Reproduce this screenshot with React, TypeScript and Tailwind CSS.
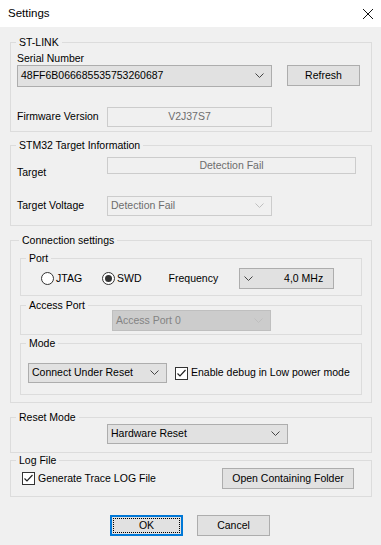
import { ReactNode } from 'react';
import { clsx } from 'clsx';

const Chevron = ({ disabled = false }: { disabled?: boolean }) => (
  <svg width="9" height="6" viewBox="0 0 9 6" className="shrink-0">
    <path d="M0.5 0.5 L4.5 4.5 L8.5 0.5" fill="none" stroke={disabled ? '#bfbfbf' : '#444'} strokeWidth="1" />
  </svg>
);

const Group = ({
  title,
  className,
  children,
}: {
  title: string;
  className?: string;
  children: ReactNode;
}) => (
  <fieldset className={clsx('border border-[#dcdcdc] px-[6px]', className)}>
    <legend className="ml-[-1px] px-[3px] leading-[14px]">{title}</legend>
    {children}
  </fieldset>
);

const Combo = ({
  value,
  className,
  disabled = false,
}: {
  value: string;
  className?: string;
  disabled?: boolean;
}) => (
  <div
    className={clsx(
      'flex items-center justify-between border pl-[3px] pr-[7px]',
      disabled ? 'bg-[#cccccc] border-[#bfbfbf] text-[#838383]' : 'bg-[#e1e1e1] border-[#adadad]',
      className
    )}
  >
    <span>{value}</span>
    <Chevron disabled={disabled} />
  </div>
);

const Button = ({ label, className }: { label: string; className?: string }) => (
  <div
    className={clsx(
      'flex items-center justify-center border border-[#adadad] bg-[#e1e1e1]',
      className
    )}
  >
    {label}
  </div>
);

const Checkbox = () => (
  <span className="flex h-[13px] w-[13px] shrink-0 items-center justify-center border border-[#333] bg-white">
    <svg width="11" height="11" viewBox="0 0 11 11">
      <path d="M1.5 5.5 L4 8 L9.5 2" fill="none" stroke="#222" strokeWidth="1.2" />
    </svg>
  </span>
);

const Radio = ({ checked = false }: { checked?: boolean }) => (
  <span className="flex h-[13px] w-[13px] shrink-0 items-center justify-center rounded-full border border-[#333] bg-white">
    {checked && <span className="h-[7px] w-[7px] rounded-full bg-[#333]" />}
  </span>
);

export default function App() {
  return (
    <div className="h-[545px] w-[381px] overflow-hidden bg-[#f0f0f0] font-['Liberation_Sans',Arial,sans-serif] text-[10.5px] text-black">
      {/* title bar */}
      <div className="flex h-[27px] items-center justify-between bg-white pl-[8px] pr-[7px]">
        <span className="text-[11.5px]">Settings</span>
        <svg width="12" height="12" viewBox="0 0 12 12">
          <path d="M1 1 L11 11 M11 1 L1 11" stroke="#111" strokeWidth="1" />
        </svg>
      </div>

      <div className="ml-[10px] w-[362px]">
        {/* ST-LINK */}
        <Group title="ST-LINK" className="mt-[8px] pb-[4px]">
          <div className="mt-[2px] leading-[14px]">Serial Number</div>
          <div className="flex items-start">
            <Combo value="48FF6B066685535753260687" className="h-[22px] w-[255px]" />
            <Button label="Refresh" className="ml-[15px] h-[21px] w-[73px]" />
          </div>
          <div className="mt-[20px] flex items-center">
            <span className="w-[90px]">Firmware Version</span>
            <div className="flex h-[20px] w-[165px] items-center justify-center border border-[#cccccc] text-[#6d6d6d]">
              V2J37S7
            </div>
          </div>
        </Group>

        {/* STM32 */}
        <Group title="STM32 Target Information" className="mt-[6px] pb-[9px]">
          <div className="mt-[5px] flex items-start">
            <span className="mt-[8px] w-[90px] leading-[14px]">Target</span>
            <div className="flex h-[17px] w-[249px] items-center justify-center border border-[#cccccc] text-[#6d6d6d]">
              Detection Fail
            </div>
          </div>
          <div className="mt-[17px] flex items-center">
            <span className="w-[90px]">Target Voltage</span>
            <div className="flex h-[20px] w-[165px] items-center justify-between border border-[#cccccc] pl-[3px] pr-[7px] text-[#6d6d6d]">
              <span>Detection Fail</span>
              <Chevron disabled />
            </div>
          </div>
        </Group>

        {/* Connection settings */}
        <Group title="Connection settings" className="mt-[7px] pb-[7px] pl-[9px] pr-[9px]">
          <Group title="Port" className="mt-[4px] pb-[6px]">
            <div className="mt-[3px] flex h-[21px] items-center">
              <span className="ml-[14px] flex items-center gap-[2px]">
                <Radio />
                JTAG
              </span>
              <span className="ml-[20px] flex items-center gap-[2px]">
                <Radio checked />
                SWD
              </span>
              <span className="ml-[27px]">Frequency</span>
              <div className="ml-[21px] flex h-[21px] w-[95px] items-center justify-between border border-[#adadad] bg-[#e1e1e1] pl-[4px] pr-[10px]">
                <Chevron />
                <span>4,0 MHz</span>
              </div>
            </div>
          </Group>

          <Group title="Access Port" className="mt-[2px] pb-[3px]">
            <Combo value="Access Port 0" disabled className="ml-[85px] mt-[-2px] h-[21px] w-[159px]" />
          </Group>

          <Group title="Mode" className="mt-[1px] pb-[11px]">
            <div className="mt-[13px] flex items-center">
              <Combo value="Connect Under Reset" className="ml-[1px] h-[20px] w-[139px]" />
              <span className="ml-[8px] flex items-center gap-[3px]">
                <Checkbox />
                Enable debug in Low power mode
              </span>
            </div>
          </Group>
        </Group>

        {/* Reset Mode */}
        <Group title="Reset Mode" className="mt-[7px] pb-[8px]">
          <Combo value="Hardware Reset" className="ml-[90px] h-[20px] w-[181px]" />
        </Group>

        {/* Log File */}
        <Group title="Log File" className="pb-[7px]">
          <div className="mt-[1px] flex items-center">
            <span className="ml-[5px] flex items-center gap-[3px]">
              <Checkbox />
              Generate Trace LOG File
            </span>
            <Button label="Open Containing Folder" className="ml-auto mr-[11px] h-[21px] w-[132px]" />
          </div>
        </Group>
      </div>

      {/* dialog buttons */}
      <div className="mt-[18px] flex justify-center gap-[14px] pr-[1px]">
        <div className="flex h-[21px] w-[73px] items-center justify-center border-2 border-[#0078d7] bg-[#e1e1e1] p-[1px]">
          <span className="flex h-full w-full items-center justify-center border border-dotted border-black">OK</span>
        </div>
        <Button label="Cancel" className="h-[21px] w-[73px]" />
      </div>
    </div>
  );
}
